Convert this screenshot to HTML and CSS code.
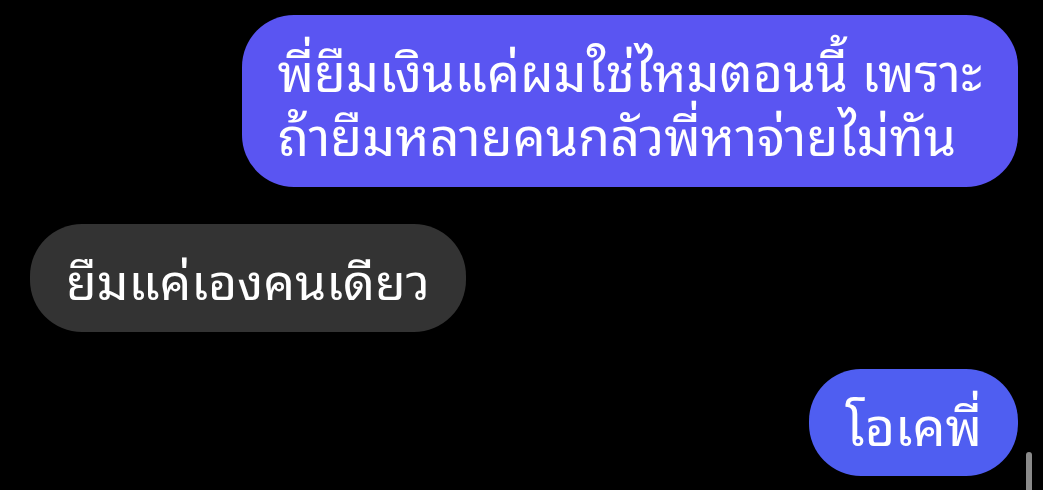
FILE: index.html
```html
<!DOCTYPE html>
<html lang="th">
<head>
  <meta charset="UTF-8" />
  <meta name="viewport" content="width=device-width, initial-scale=1.0"/>
  <title>แชท</title>
  <link rel="stylesheet" href="styles.css">
</head>
<body>

<!-- Conversación -->
<div class="chat">
  <div class="fila derecha">
    <div class="burbuja enviada">พี่ยืมเงินแค่ผมใช่ไหมตอนนี้ เพราะ<br>ถ้ายืมหลายคนกลัวพี่หาจ่ายไม่ทัน</div>
  </div>
  <div class="fila izquierda">
    <div class="burbuja recibida">ยืมแค่เองคนเดียว</div>
  </div>
  <div class="fila derecha">
    <div class="burbuja enviada ultima">โอเคพี่</div>
  </div>
</div>

<div class="scroll"></div>

</body>
</html>
```

FILE: styles.css
```css
* { margin: 0; padding: 0; box-sizing: border-box; }
body {
  background-color: black;
  overflow: hidden;
  font-family: "Noto Sans Thai Looped", "Noto Sans Thai", sans-serif;
  height: 100vh;
}

.chat {
  display: flex;
  flex-direction: column;
  gap: 37px;
  padding: 15px 25px 0 30px;
}

.fila {
  display: flex;
}

.derecha { justify-content: flex-end; }
.izquierda { justify-content: flex-start; }

.burbuja {
  color: white;
  font-size: 50px;
  line-height: 62px;
  padding: 23px 36px 23px 36px;
  border-radius: 52px;
  white-space: nowrap;
}

.enviada {
  background-color: #5a55f2;
  font-size: 52px;
  line-height: 64px;
  padding-top: 22px;
  padding-bottom: 22px;
}

.ultima {
  background-color: #4f5ef1;
  line-height: 62px;
  padding-top: 23px;
  padding-bottom: 22px;
}

.recibida {
  background-color: #333333;
}

.scroll {
  position: absolute;
  left: 1026px;
  top: 452px;
  width: 6px;
  height: 50px;
  border-radius: 3px;
  background: #8a8a8a;
}
```
